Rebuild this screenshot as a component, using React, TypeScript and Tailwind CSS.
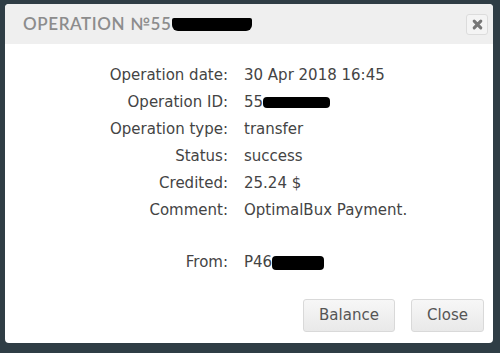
import React from 'react';

type Row = {
  label: string;
  value: string;
  hidden?: string;
};

const rows: Row[] = [
  { label: "Operation date:", value: "30 Apr 2018 16:45" },
  { label: "Operation ID:", value: "55", hidden: "w-[67px] h-[11px]" },
  { label: "Operation type:", value: "transfer" },
  { label: "Status:", value: "success" },
  { label: "Credited:", value: "25.24 $" },
  { label: "Comment:", value: "OptimalBux Payment." },
];

function InfoRow({ row }: { row: Row }) {
  return (
    <div className="flex h-[27px] items-center">
      <div className="w-[223px] text-right">{row.label}</div>
      <div className="ml-[16px] flex items-center">
        <span>{row.value}</span>
        {row.hidden && <span className={`${row.hidden} bg-black rounded-sm`} />}
      </div>
    </div>
  );
}

function App() {
  return (
    <div className="w-[500px] h-[353px] bg-[#2f3d45] pt-[4px] pl-[5px]">
      <div className="w-[488px] h-[339px] bg-white rounded-sm flex flex-col overflow-hidden text-[#444] font-['DejaVu_Sans',sans-serif] text-[14.5px]">
        {/* header */}
        <div className="h-[40px] bg-[#efefef] flex items-center justify-between pl-[18px] pr-[5px] shrink-0">
          <div className="flex items-center text-[#8c8c8c] text-[17px] tracking-[0.6px] font-['Lato',sans-serif] font-semibold">
            <span>OPERATION №55</span>
            <span className="w-[80px] h-[13px] bg-black rounded-b-[6px] rounded-t-[2px] ml-[1px]" />
          </div>
          <button className="w-[22px] h-[21px] border border-[#dcdcdc] bg-[#f4f4f4] rounded-[3px] flex items-center justify-center">
            <svg width="11" height="11" viewBox="0 0 10 10">
              <path d="M2 2 L8 8 M8 2 L2 8" stroke="#777" strokeWidth="2.8" strokeLinecap="round" />
            </svg>
          </button>
        </div>
        {/* body */}
        <div className="pt-[18px] flex flex-col text-[15px]">
          {rows.map((row, i) => (
            <InfoRow key={i} row={row} />
          ))}
          <div className="h-[25px]" />
          <InfoRow row={{ label: "From:", value: "P46", hidden: "w-[52px] h-[14px]" }} />
        </div>
        {/* buttons */}
        <div className="flex justify-end gap-4 pr-[9px] mt-[23px]">
          <button className="w-[92px] h-[33px] rounded-[3px] border border-[#d9d9d9] bg-gradient-to-b from-[#f7f7f7] to-[#e9e9e9] text-[15px] text-[#555]">
            Balance
          </button>
          <button className="w-[73px] h-[33px] rounded-[3px] border border-[#d9d9d9] bg-gradient-to-b from-[#f7f7f7] to-[#e9e9e9] text-[15px] text-[#555]">
            Close
          </button>
        </div>
      </div>
    </div>
  );
}

export default App;
